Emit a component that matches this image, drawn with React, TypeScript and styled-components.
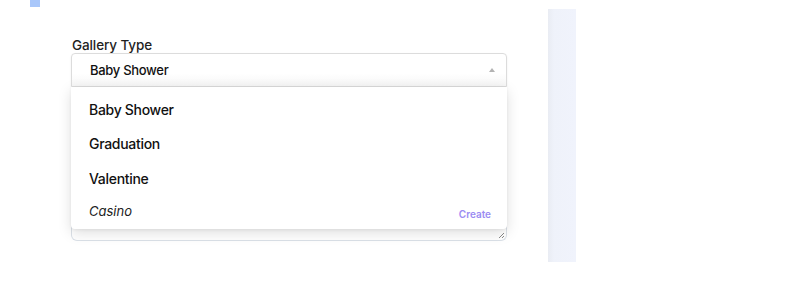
import React from "react";
import styled, { createGlobalStyle } from "styled-components";

const Global = createGlobalStyle`
  html, body { margin: 0; padding: 0; background: #fff; }
  body { font-family: Inter, "Noto Sans", sans-serif; color: #1f1f1f; }
`;

const Page = styled.div`
  display: flex;
  width: 787px;
  height: 283px;
  overflow: hidden;
`;

const Main = styled.div`
  width: 548px;
  display: flex;
  flex-direction: column;
`;

const Marker = styled.div`
  margin-left: 30px;
  width: 10px;
  height: 7px;
  background: #a9c7fa;
`;

const Form = styled.div`
  margin: 30px 0 0 71px;
  width: 436px;
  display: flex;
  flex-direction: column;
`;

const Label = styled.label`
  font-size: 13.5px;
  font-weight: 500;
  line-height: 16px;
  letter-spacing: -0.1px;
  color: #1f1f1f;
  padding-left: 1px;
`;

const Field = styled.div`
  position: relative;
`;

const Select = styled.div`
  height: 34px;
  box-sizing: border-box;
  border: 1px solid #dcdcdc;
  border-radius: 4px 4px 0 0;
  background: linear-gradient(#ffffff 60%, #f6f6f6);
  box-shadow: 0 1px 2px rgba(0, 0, 0, 0.08);
  display: flex;
  align-items: center;
  justify-content: space-between;
  padding: 0 11px 0 18px;
  font-size: 13px;
  font-weight: 500;
  letter-spacing: -0.3px;
  color: #111;
`;

const Arrow = styled.span`
  width: 0;
  height: 0;
  border-left: 3.5px solid transparent;
  border-right: 3.5px solid transparent;
  border-bottom: 4px solid #b3b3b3;
`;

const TextArea = styled.div`
  position: relative;
  height: 154px;
  box-sizing: border-box;
  border: 1px solid #dbe1e8;
  border-top: none;
  border-radius: 0 0 6px 6px;
  background: #fff;
`;

const Grip = styled.svg`
  position: absolute;
  right: 1px;
  bottom: 1px;
`;

const Menu = styled.ul`
  position: absolute;
  top: 34px;
  left: 0;
  right: 0;
  margin: 0;
  padding: 5px 0 0;
  list-style: none;
  background: #fff;
  border-radius: 0 0 4px 4px;
  box-shadow: 0 4px 14px rgba(0, 0, 0, 0.13), 0 1px 3px rgba(0, 0, 0, 0.06);
`;

const Option = styled.li`
  height: 34.5px;
  display: flex;
  align-items: center;
  padding-left: 18px;
  font-size: 14px;
  font-weight: 500;
  letter-spacing: -0.3px;
  color: #111;
`;

const CreateRow = styled.li`
  height: 33px;
  display: flex;
  justify-content: space-between;
  padding: 0 16px 0 18px;
  box-sizing: border-box;
`;

const Typed = styled.span`
  font-size: 13px;
  font-style: italic;
  color: #222;
  padding-top: 7px;
`;

const CreateBtn = styled.span`
  font-size: 10px;
  font-weight: 600;
  color: #9b8cf2;
  padding-top: 12px;
`;

const SidePanel = styled.div`
  margin-top: 9px;
  width: 28px;
  height: 253px;
  background: linear-gradient(to right, #e9ecf3 0px, #eff2fa 6px, #f0f3fc);
`;

export default function App() {
  const options = ["Baby Shower", "Graduation", "Valentine"];
  return (
    <>
      <Global />
      <Page>
        <Main>
          <Marker />
          <Form>
            <Label>Gallery Type</Label>
            <Field>
              <Select>
                <span>Baby Shower</span>
                <Arrow />
              </Select>
              <TextArea>
                <Grip width="8" height="8" viewBox="0 0 8 8">
                  <path d="M7 2 L2 7 M7 5 L5 7" stroke="#8a8a8a" strokeWidth="1" />
                </Grip>
              </TextArea>
              <Menu>
                {options.map((o) => (
                  <Option key={o}>{o}</Option>
                ))}
                <CreateRow>
                  <Typed>Casino</Typed>
                  <CreateBtn>Create</CreateBtn>
                </CreateRow>
              </Menu>
            </Field>
          </Form>
        </Main>
        <SidePanel />
      </Page>
    </>
  );
}
